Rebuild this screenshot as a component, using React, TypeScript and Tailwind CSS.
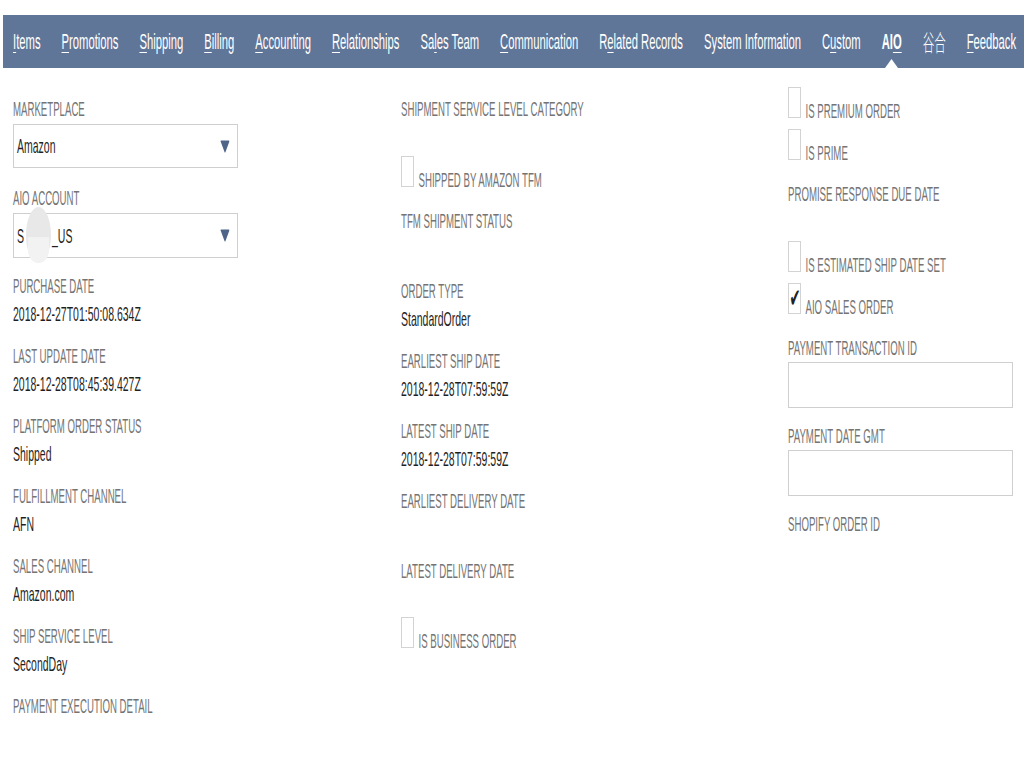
import type { ReactNode } from "react";

type Tab = { label: string; key: number; bold?: boolean; active?: boolean };

const tabs: Tab[] = [
  { label: "Items", key: 0 },
  { label: "Promotions", key: 0 },
  { label: "Shipping", key: 0 },
  { label: "Billing", key: 0 },
  { label: "Accounting", key: 0 },
  { label: "Relationships", key: 0 },
  { label: "Sales Team", key: 2 },
  { label: "Communication", key: 0 },
  { label: "Related Records", key: 1 },
  { label: "System Information", key: -1 },
  { label: "Custom", key: 1 },
  { label: "AIO", key: 2, bold: true, active: true },
];

// The whole page is drawn at double width and squeezed horizontally by half,
// which is how the reference screenshot was captured.

function TabLabel({ tab }: { tab: Tab }) {
  const { label, key } = tab;
  if (key < 0) return <>{label}</>;
  return (
    <>
      {label.slice(0, key)}
      <span className="underline decoration-1 underline-offset-[3px]">{label[key]}</span>
      {label.slice(key + 1)}
    </>
  );
}

function TabBar() {
  return (
    <div className="ml-[6px] mt-[15px] flex h-[53px] items-center gap-[42px] bg-[#5f7698] pl-[20px] text-[22.5px] text-white">
      {tabs.map((tab) => (
        <div
          key={tab.label}
          className={`relative flex h-full items-center whitespace-nowrap ${tab.bold ? "font-bold" : ""}`}
        >
          <TabLabel tab={tab} />
          {tab.active ? (
            <span className="absolute bottom-0 left-1/2 h-0 w-0 -translate-x-1/2 border-x-[13px] border-b-[9px] border-x-transparent border-b-white" />
          ) : null}
        </div>
      ))}
      <div className="flex h-full items-center text-[23px] font-light [font-family:'Noto_Sans_CJK_SC',sans-serif]">谷合</div>
      <div className="flex h-full items-center whitespace-nowrap">
        <span className="underline decoration-1 underline-offset-[3px]">F</span>eedback
      </div>
    </div>
  );
}

function Label({ children, className = "" }: { children: ReactNode; className?: string }) {
  return (
    <div className={`h-[24px] whitespace-nowrap text-[19.3px] leading-[24px] text-[#747474] ${className}`}>
      {children}
    </div>
  );
}

function Field({ label, value, last }: { label: string; value?: string; last?: boolean }) {
  return (
    <div className={last ? "" : "mb-[18px]"}>
      <Label>{label}</Label>
      <div className="mt-[2px] h-[26px] whitespace-nowrap text-[21px] leading-[26px] text-[#1f1f1f]">{value}</div>
    </div>
  );
}

function Caret() {
  return (
    <svg width="20" height="13" viewBox="0 0 20 13" className="shrink-0">
      <path d="M1 1.5 Q1 0.5 2.5 0.5 H17.5 Q19 0.5 18.5 1.8 L11 12 Q10 13 9 12 L1.5 1.8 Z" fill="#4d6589" />
    </svg>
  );
}

function Select({ children, className = "" }: { children: ReactNode; className?: string }) {
  return (
    <div
      className={`flex w-[450px] items-center justify-between border-x-2 border-y border-[#cfcfcf] bg-white pl-[6px] pr-[14px] text-[21px] text-[#1f1f1f] ${className}`}
    >
      <div className="flex items-center whitespace-nowrap">{children}</div>
      <Caret />
    </div>
  );
}

function Checkbox({ label, checked, className = "" }: { label: string; checked?: boolean; className?: string }) {
  return (
    <div className={`flex items-end ${className}`}>
      <div className="flex h-[31px] w-[26px] shrink-0 justify-start border-x-2 border-y border-[#d3d3d3] bg-white pl-[1px] pt-[1px]">
        {checked ? (
          <span className="text-[26px] leading-none text-[#222] [font-family:'DejaVu_Sans',sans-serif]">✔</span>
        ) : null}
      </div>
      <span className="mb-[-3px] ml-[9px] whitespace-nowrap text-[19.3px] leading-none text-[#747474]">{label}</span>
    </div>
  );
}

function TextInput({ className = "" }: { className?: string }) {
  return <div className={`h-[46px] w-[450px] border-x-2 border-y border-[#cfcfcf] bg-white ${className}`} />;
}

export default function App() {
  return (
    <div className="h-[768px] w-[1024px] overflow-hidden bg-white">
      <div className="w-[2048px] origin-top-left scale-x-50 [font-family:'Liberation_Sans',Arial,sans-serif]">
        <TabBar />
        <div className="grid grid-cols-[776px_774px_1fr] pl-[26px]">
          {/* left column */}
          <div className="pt-[30px]">
            <Label>MARKETPLACE</Label>
            <Select className="mt-[2px] h-[44px]">Amazon</Select>
            <Label className="mt-[19px]">AIO ACCOUNT</Label>
            <Select className="mt-[2px] h-[45px]">
              S
              <span className="relative inline-block h-[26px] w-[56px]">
                <span className="absolute left-[4px] top-[-16px] h-[56px] w-[50px] rounded-[50%] bg-[#e8e8e8]" />
                <span className="absolute left-[8px] top-[14px] h-[26px] w-[42px] rounded-b-[50%] bg-[#f2f2f2]" />
              </span>
              _US
            </Select>
            <div className="mt-[17px]">
              <Field label="PURCHASE DATE" value="2018-12-27T01:50:08.634Z" />
              <Field label="LAST UPDATE DATE" value="2018-12-28T08:45:39.427Z" />
              <Field label="PLATFORM ORDER STATUS" value="Shipped" />
              <Field label="FULFILLMENT CHANNEL" value="AFN" />
              <Field label="SALES CHANNEL" value="Amazon.com" />
              <Field label="SHIP SERVICE LEVEL" value="SecondDay" />
              <Label>PAYMENT EXECUTION DETAIL</Label>
            </div>
          </div>

          {/* middle column */}
          <div className="pt-[30px]">
            <Field label="SHIPMENT SERVICE LEVEL CATEGORY" last />
            <Checkbox label="SHIPPED BY AMAZON TFM" className="mt-[6px]" />
            <div className="mt-[23px]">
              <Field label="TFM SHIPMENT STATUS" />
              <Field label="ORDER TYPE" value="StandardOrder" />
              <Field label="EARLIEST SHIP DATE" value="2018-12-28T07:59:59Z" />
              <Field label="LATEST SHIP DATE" value="2018-12-28T07:59:59Z" />
              <Field label="EARLIEST DELIVERY DATE" />
              <Field label="LATEST DELIVERY DATE" last />
            </div>
            <Checkbox label="IS BUSINESS ORDER" className="mt-[5px]" />
          </div>

          {/* right column */}
          <div className="pt-[19px]">
            <Checkbox label="IS PREMIUM ORDER" />
            <Checkbox label="IS PRIME" className="mt-[11px]" />
            <div className="mt-[23px]">
              <Field label="PROMISE RESPONSE DUE DATE" last />
            </div>
            <Checkbox label="IS ESTIMATED SHIP DATE SET" className="mt-[6px]" />
            <Checkbox label="AIO SALES ORDER" checked className="mt-[11px]" />
            <Label className="mt-[23px]">PAYMENT TRANSACTION ID</Label>
            <TextInput className="mt-[1px]" />
            <Label className="mt-[17px]">PAYMENT DATE GMT</Label>
            <TextInput className="mt-[1px]" />
            <Label className="mt-[17px]">SHOPIFY ORDER ID</Label>
          </div>
        </div>
      </div>
    </div>
  );
}
